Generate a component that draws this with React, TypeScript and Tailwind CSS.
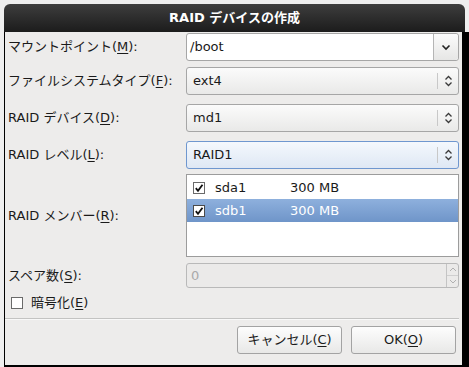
import React from "react";

const font = { fontFamily: '"DejaVu Sans", "Noto Sans CJK JP", sans-serif' };

function U({ c }: { c: string }) {
  return <span className="underline underline-offset-2">{c}</span>;
}

function UpDown({ disabled = false }: { disabled?: boolean }) {
  const col = disabled ? "#b0b0b0" : "#3a3a3a";
  return (
    <svg width="9" height="12" viewBox="0 0 9 12">
      <path d="M1.5 4.5 L4.5 1.5 L7.5 4.5" fill="none" stroke={col} strokeWidth="1.3" />
      <path d="M1.5 7.5 L4.5 10.5 L7.5 7.5" fill="none" stroke={col} strokeWidth="1.3" />
    </svg>
  );
}

function Combo({ text, focus = false }: { text: string; focus?: boolean }) {
  return (
    <div
      className={
        "flex h-full w-full items-center rounded-[3px] border " +
        (focus
          ? "border-[#6f97cf] bg-gradient-to-b from-[#f4f8fd] to-[#dfe8f4]"
          : "border-[#a6a6a6] bg-gradient-to-b from-[#fbfbfb] to-[#e9e9e8]")
      }
    >
      <span className="flex-1 pl-[6px] text-[13px] text-[#1a1a1a]">{text}</span>
      <div className="h-[16px] w-px bg-[#c8c8c8]" />
      <div className="flex w-[20px] items-center justify-center">
        <UpDown />
      </div>
    </div>
  );
}

function Check({ checked, light = false }: { checked: boolean; light?: boolean }) {
  return (
    <div
      className={
        "flex h-[12px] w-[12px] items-center justify-center border " +
        (light ? "border-[#4a4a4a] bg-white" : "border-[#6a6a6a] bg-white")
      }
    >
      {checked && (
        <svg width="10" height="10" viewBox="0 0 10 10">
          <path d="M1.8 5.2 L4 7.8 L8.5 1.8" fill="none" stroke="#111" strokeWidth="1.8" />
        </svg>
      )}
    </div>
  );
}

function Row({
  label,
  children,
  className,
}: {
  label: React.ReactNode;
  children: React.ReactNode;
  className: string;
}) {
  return (
    <div className={"flex items-center " + className}>
      <div className="flex-1 pl-[3px] text-[13px] text-[#1a1a1a]">{label}</div>
      <div className="h-full w-[273px]">{children}</div>
    </div>
  );
}

export default function App() {
  return (
    <div className="h-[367px] w-[469px] overflow-hidden bg-[#efefef]" style={font}>
      <div className="flex pl-[4px] pt-[4px]">
        <div className="flex h-[363px] w-[461px] flex-col">
          <div className="flex h-[28px] items-center justify-center rounded-t-[6px] bg-gradient-to-b from-[#3e3e3e] to-[#1c1c1c] text-[13px] font-bold text-white">
            RAID デバイスの作成
          </div>
          <div className="flex flex-1 flex-col border-b-2 border-l border-r-[3px] border-black bg-[#edeceb] pr-[3px]">
            <Row className="mt-[1px] h-[28px]" label={<>マウントポイント(<U c="M" />):</>}>
              <div className="flex h-full w-full items-stretch rounded-[3px] border border-[#a6a6a6] bg-white">
                <span className="flex flex-1 items-center pl-[3px] text-[13px] text-[#1a1a1a]">/boot</span>
                <div className="flex w-[25px] items-center justify-center rounded-r-[3px] border-l border-[#b5b5b5] bg-gradient-to-b from-[#fbfbfb] to-[#e6e6e5]">
                  <svg width="10" height="7" viewBox="0 0 10 7">
                    <path d="M1.5 1.5 L5 5 L8.5 1.5" fill="none" stroke="#222" strokeWidth="1.6" />
                  </svg>
                </div>
              </div>
            </Row>
            <Row className="mt-[6px] h-[28px]" label={<>ファイルシステムタイプ(<U c="F" />):</>}>
              <Combo text="ext4" />
            </Row>
            <Row className="mt-[9px] h-[28px]" label={<>RAID デバイス(<U c="D" />):</>}>
              <Combo text="md1" />
            </Row>
            <Row className="mt-[9px] h-[28px]" label={<>RAID レベル(<U c="L" />):</>}>
              <Combo text="RAID1" focus />
            </Row>
            <Row className="mt-[5px] h-[83px]" label={<>RAID メンバー(<U c="R" />):</>}>
              <div className="h-full w-full border border-[#9c9c9c] bg-white pt-[1px]">
                <div className="flex h-[23px] items-center text-[13px] text-[#1a1a1a]">
                  <div className="ml-[6px]">
                    <Check checked />
                  </div>
                  <span className="ml-[10px] w-[75px]">sda1</span>
                  <span>300 MB</span>
                </div>
                <div className="flex h-[23px] items-center bg-gradient-to-b from-[#8eb0dd] to-[#6f95c9] text-[13px] text-white">
                  <div className="ml-[6px]">
                    <Check checked light />
                  </div>
                  <span className="ml-[10px] w-[75px]">sdb1</span>
                  <span>300 MB</span>
                </div>
              </div>
            </Row>
            <Row className="mt-[6px] h-[25px]" label={<>スペア数(<U c="S" />):</>}>
              <div className="flex h-full w-full items-stretch rounded-[3px] border border-[#b9b9b9] bg-[#ebeae9]">
                <span className="flex flex-1 items-center pl-[4px] text-[13px] text-[#a9a9a9]">0</span>
                <div className="flex w-[12px] flex-col border-l border-[#c4c4c4]">
                  <div className="flex flex-1 items-center justify-center">
                    <svg width="8" height="5" viewBox="0 0 8 5">
                      <path d="M1 4 L4 1 L7 4" fill="none" stroke="#b0b0b0" strokeWidth="1" />
                    </svg>
                  </div>
                  <div className="h-px bg-[#cfcfcf]" />
                  <div className="flex flex-1 items-center justify-center">
                    <svg width="8" height="5" viewBox="0 0 8 5">
                      <path d="M1 1 L4 4 L7 1" fill="none" stroke="#b0b0b0" strokeWidth="1" />
                    </svg>
                  </div>
                </div>
              </div>
            </Row>
            <div className="mt-[8px] flex h-[14px] items-center pl-[6px] text-[13px] text-[#1a1a1a]">
              <Check checked={false} />
              <span className="ml-[8px]">
                暗号化(<U c="E" />)
              </span>
            </div>
            <div className="mt-[8px] h-px bg-[#c3c3c2]" />
            <div className="h-px bg-[#f8f8f8]" />
            <div className="mt-[6px] flex justify-end gap-[9px] pr-[3px]">
              <button className="h-[28px] w-[105px] rounded-[3px] border border-[#a3a3a3] bg-gradient-to-b from-[#fdfdfd] to-[#e8e8e7] text-[13px] text-[#1a1a1a]">
                キャンセル(<U c="C" />)
              </button>
              <button className="h-[28px] w-[105px] rounded-[3px] border border-[#a3a3a3] bg-gradient-to-b from-[#fdfdfd] to-[#e8e8e7] text-[13px] text-[#1a1a1a]">
                OK(<U c="O" />)
              </button>
            </div>
          </div>
        </div>
        <div className="mt-[28px] h-[335px] w-[4px] bg-black" />
      </div>
    </div>
  );
}
